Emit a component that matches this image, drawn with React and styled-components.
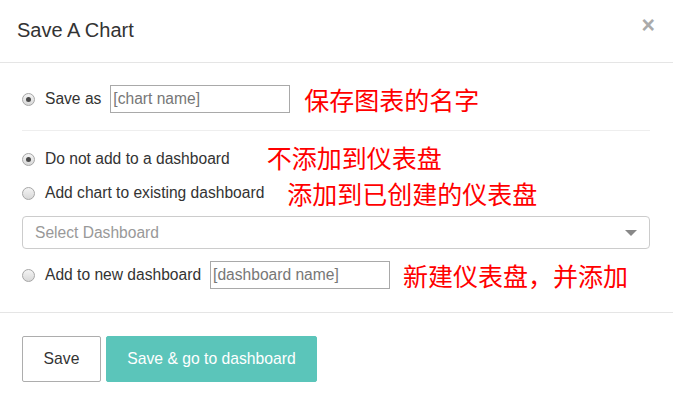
import React from 'react';
import styled, { createGlobalStyle } from 'styled-components';

const Global = createGlobalStyle`
  html, body { margin: 0; padding: 0; background: #fff; }
  body { font-family: "Liberation Sans", Arial, sans-serif; color: #333; }
`;

const Modal = styled.div`
  width: 673px;
  height: 405px;
  background: #fff;
  box-sizing: border-box;
  overflow: hidden;
`;

const Header = styled.div`
  height: 62px;
  border-bottom: 1px solid #e5e5e5;
  display: flex;
  align-items: center;
  justify-content: space-between;
  padding: 0 17px 0 17px;
`;

const Title = styled.h4`
  margin: 0;
  font-size: 20px;
  font-weight: normal;
  color: #333;
  position: relative;
  top: -1px;
`;

const Close = styled.span`
  font-size: 23px;
  font-weight: bold;
  color: #aaa;
  line-height: 1;
  position: relative;
  top: -6px;
  right: 1px;
`;

const Body = styled.div`
  padding: 22px 23px 23px 22px;
  display: flex;
  flex-direction: column;
`;

const Row = styled.div`
  display: flex;
  align-items: center;
  height: ${p => p.h}px;
  margin-top: ${p => p.mt || 0}px;
  font-size: 15.6px;
  color: #333;
  white-space: nowrap;
`;

const Radio = styled.span`
  width: 11px;
  height: 11px;
  border-radius: 50%;
  border: 1px solid #a6a6a6;
  background: linear-gradient(#f4f4f4, #d8d8d8);
  display: inline-flex;
  align-items: center;
  justify-content: center;
  margin-right: 10px;
  flex: none;
  &::after {
    content: '';
    width: 5px;
    height: 5px;
    border-radius: 50%;
    background: ${p => (p.checked ? '#4a4a4a' : 'transparent')};
  }
`;

const Label = styled.span`
  margin-right: 9px;
`;

const TextBox = styled.div`
  width: 180px;
  height: 28px;
  box-sizing: border-box;
  border: 1px solid #a9a9a9;
  padding: 0 2px;
  display: flex;
  align-items: center;
  color: #777;
  font-size: 15.6px;
`;

const Note = styled.span`
  font-family: "Noto Sans CJK SC", sans-serif;
  font-size: 25px;
  color: #ff0000;
  margin-left: ${p => p.ml}px;
  position: relative;
  top: ${p => p.dy || 0}px;
`;

const Divider = styled.hr`
  border: 0;
  border-top: 1px solid #eee;
  margin: 17px 0 0 0;
`;

const Select = styled.div`
  margin-top: 11px;
  height: 33px;
  box-sizing: border-box;
  border: 1px solid #ccc;
  border-radius: 4px;
  display: flex;
  align-items: center;
  justify-content: space-between;
  padding: 0 12px 0 12px;
  color: #999;
  font-size: 15.6px;
`;

const Caret = styled.span`
  width: 0;
  height: 0;
  border-left: 6px solid transparent;
  border-right: 6px solid transparent;
  border-top: 6px solid #888;
  margin-top: 1px;
`;

const Footer = styled.div`
  border-top: 1px solid #e5e5e5;
  padding: 23px 22px;
  display: flex;
  gap: 5px;
`;

const Button = styled.div`
  height: 46px;
  box-sizing: border-box;
  display: flex;
  align-items: center;
  justify-content: center;
  border-radius: 2px;
  font-size: 15.7px;
  width: ${p => p.w}px;
  color: ${p => (p.primary ? '#fff' : '#333')};
  background: ${p => (p.primary ? '#5bc5ba' : '#fff')};
  border: 1px solid ${p => (p.primary ? '#5bc5ba' : '#adadad')};
`;

export default function App() {
  return (
    <>
      <Global />
      <Modal>
        <Header>
          <Title>Save A Chart</Title>
          <Close>×</Close>
        </Header>
        <Body>
          <Row h={28}>
            <Radio checked />
            <Label>Save as</Label>
            <TextBox>[chart name]</TextBox>
            <Note ml={14}>保存图表的名字</Note>
          </Row>
          <Divider />
          <Row h={24} mt={16}>
            <Radio checked />
            <span>Do not add to a dashboard</span>
            <Note ml={37} dy={-2}>不添加到仪表盘</Note>
          </Row>
          <Row h={24} mt={10}>
            <Radio />
            <span>Add chart to existing dashboard</span>
            <Note ml={23}>添加到已创建的仪表盘</Note>
          </Row>
          <Select>
            <span>Select Dashboard</span>
            <Caret />
          </Select>
          <Row h={28} mt={12}>
            <Radio />
            <Label>Add to new dashboard</Label>
            <TextBox>[dashboard name]</TextBox>
            <Note ml={13}>新建仪表盘，并添加</Note>
          </Row>
        </Body>
        <Footer>
          <Button w={79}>Save</Button>
          <Button w={211} primary>Save &amp; go to dashboard</Button>
        </Footer>
      </Modal>
    </>
  );
}
